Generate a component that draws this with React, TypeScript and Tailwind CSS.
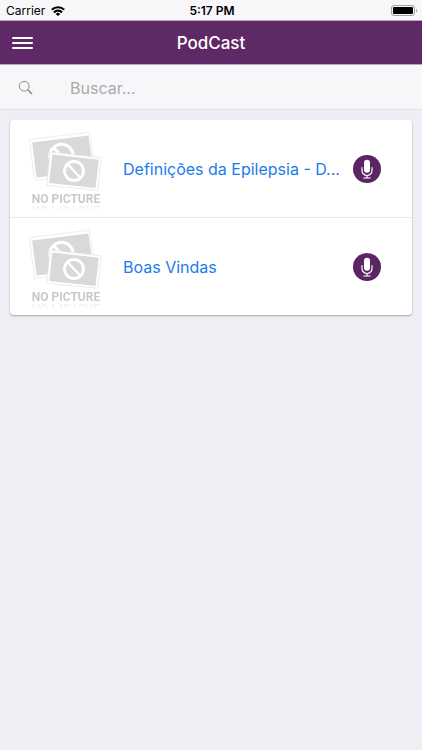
import React, { useState } from 'react';

interface Episode {
  id: number;
  title: string;
}

const episodes: Episode[] = [
  { id: 1, title: 'Definições da Epilepsia - D...' },
  { id: 2, title: 'Boas Vindas' },
];

function StatusBar() {
  return (
    <div className="grid h-5 grid-cols-3 items-center pt-0.5 pr-1 pl-1.5 text-xs text-black">
      <div className="flex items-center gap-1.5">
        <span>Carrier</span>
        <svg viewBox="0 0 14 10" className="h-2.5 w-3.5" fill="none" stroke="black" strokeWidth="2.2">
          <path d="M0.8 3.8a8.8 8.8 0 0 1 12.4 0" />
          <path d="M3 6.4a5.6 5.6 0 0 1 8 0" />
          <path d="M7 10L4.7 7.9a3.2 3.2 0 0 1 4.6 0z" fill="black" stroke="none" />
        </svg>
      </div>
      <span className="text-center font-semibold">5:17 PM</span>
      <svg viewBox="0 0 27 12" className="h-3 w-[27px] justify-self-end">
        <rect x="0.5" y="0.5" width="23" height="10" rx="2.5" fill="none" stroke="#a0a0a2" />
        <rect x="2" y="2" width="20" height="7" rx="1" fill="black" />
        <path d="M25 4v3.4c1.6-.6 1.6-2.8 0-3.4z" fill="#a0a0a2" />
      </svg>
    </div>
  );
}

function Header() {
  return (
    <header className="grid h-[45px] grid-cols-[48px_1fr_48px] items-center border-y border-[#b9a6bd] bg-[#5f2967] text-white">
      <button type="button" aria-label="Menu" className="flex flex-col gap-[3px] pl-3">
        <span className="h-0.5 w-[21px] rounded-full bg-white" />
        <span className="h-0.5 w-[21px] rounded-full bg-white" />
        <span className="h-0.5 w-[21px] rounded-full bg-white" />
      </button>
      <h1 className="pt-0.5 text-center text-[17px] font-medium">PodCast</h1>
    </header>
  );
}

interface SearchBarProps {
  value: string;
  onChange: (value: string) => void;
}

function SearchBar({ value, onChange }: SearchBarProps) {
  return (
    <label className="flex h-[45px] items-center gap-9 border-b border-[#e0e0e3] bg-[#f7f7f9] px-[18px] pt-0.5">
      <svg viewBox="0 0 16 16" className="h-4 w-4 shrink-0" fill="none" stroke="#8c8c8e">
        <circle cx="6.2" cy="6.2" r="4.9" />
        <path d="M9.8 9.8l4.2 4.2" strokeWidth="1.6" />
      </svg>
      <input
        type="text"
        aria-label="Buscar"
        placeholder="Buscar..."
        value={value}
        onChange={(e) => onChange(e.target.value)}
        className="min-w-0 flex-1 bg-transparent text-base text-black outline-none placeholder:text-[#a9a9ab]"
      />
    </label>
  );
}

function NoPicture() {
  return (
    <div className="flex w-[76px] shrink-0 flex-col items-center">
      <svg viewBox="0 0 76 60" className="h-[60px] w-[76px]">
        <path d="M1.5 8.5L61.5 1.2L67.5 41.5L6.5 49.5z" fill="white" stroke="#e9e9e9" strokeWidth="0.8" />
        <path d="M4.2 11.5L60.5 4.6L65.5 39.5L8.5 46.5z" fill="#d9d9d9" />
        <circle cx="33.5" cy="25" r="11.7" fill="none" stroke="white" strokeWidth="3" />
        <path d="M26 17l16 17" stroke="white" strokeWidth="3" />
        <path d="M22.2 21L73.3 26.8L69.7 59.2L18.6 54.3z" fill="white" stroke="#e6e6e6" strokeWidth="0.8" />
        <path d="M24.3 23.5L70.8 28.7L67.5 57L21.2 52z" fill="#d9d9d9" />
        <circle cx="46" cy="40" r="9.5" fill="none" stroke="white" strokeWidth="2.8" />
        <path d="M40 33.5l12 13" stroke="white" strokeWidth="2.4" />
      </svg>
      <span className="font-['Roboto',sans-serif] text-xs leading-4 font-bold whitespace-nowrap text-[#c9c9c9] [-webkit-box-reflect:below_-5px_linear-gradient(transparent_40%,rgba(0,0,0,0.5))]">
        NO PICTURE
      </span>
    </div>
  );
}

function MicIcon() {
  return (
    <svg viewBox="0 0 28 28" className="h-7 w-7 shrink-0">
      <circle cx="14" cy="14" r="14" fill="#5b2463" />
      <rect x="11" y="4.8" width="6" height="13" rx="3" fill="white" />
      <path
        d="M9 12.5v3a5 5 0 0 0 10 0v-3M14 20.5v2.5M10.8 23h6.4"
        fill="none"
        stroke="white"
        strokeWidth="1.2"
        strokeLinecap="round"
      />
    </svg>
  );
}

function EpisodeItem({ episode }: { episode: Episode }) {
  return (
    <li>
      <a href={`#episode-${episode.id}`} className="flex h-[97px] items-center pr-[31px] pl-[18px]">
        <NoPicture />
        <span className="ml-[19px] min-w-0 flex-1 text-base whitespace-nowrap text-[#1a7cec]">
          {episode.title}
        </span>
        <MicIcon />
      </a>
    </li>
  );
}

export default function App() {
  const [search, setSearch] = useState('');
  const visible = episodes.filter((episode) =>
    episode.title.toLowerCase().includes(search.toLowerCase())
  );

  return (
    <div className="min-h-screen bg-[#efeef4] font-['Inter',sans-serif]">
      <div className="bg-[#f7f7f9]">
        <StatusBar />
        <Header />
      </div>
      <SearchBar value={search} onChange={setSearch} />
      <main className="p-2.5">
        <ul className="divide-y divide-[#e9e9eb] rounded bg-white shadow-[0_1px_2px_rgba(0,0,0,0.3)]">
          {visible.map((episode) => (
            <EpisodeItem key={episode.id} episode={episode} />
          ))}
        </ul>
      </main>
    </div>
  );
}
